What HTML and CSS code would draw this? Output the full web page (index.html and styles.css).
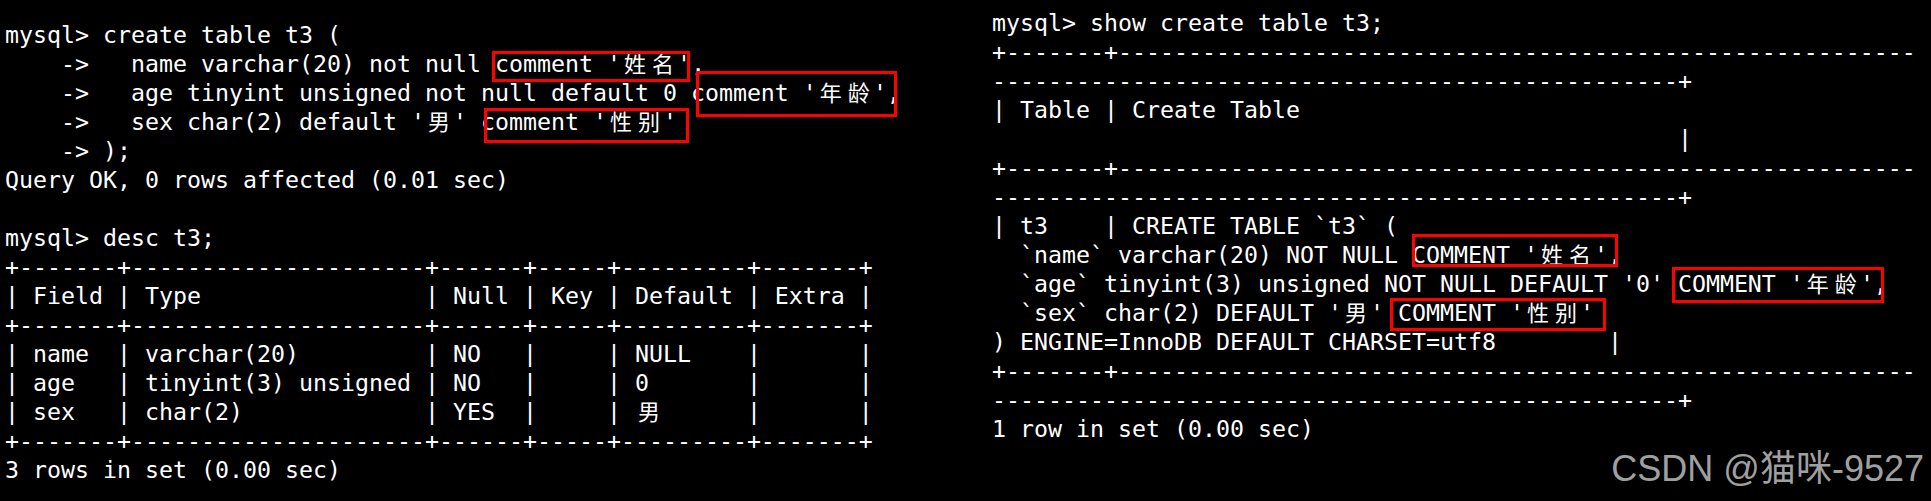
FILE: index.html
```html
<!DOCTYPE html>
<html lang="zh-CN">
<head>
<meta charset="utf-8">
<title>mysql comment</title>
<link rel="stylesheet" href="styles.css">
</head>
<body>
<div class="screen">
  <div class="pane pane-left">
    <div class="ln">mysql&gt; create table t3 (</div>
    <div class="ln">    -&gt;   name varchar(20) not null comment '<span class="cjk">姓</span><span class="cjk">名</span>',</div>
    <div class="ln">    -&gt;   age tinyint unsigned not null default 0 comment '<span class="cjk">年</span><span class="cjk">龄</span>',</div>
    <div class="ln">    -&gt;   sex char(2) default '<span class="cjk">男</span>' comment '<span class="cjk">性</span><span class="cjk">别</span>'</div>
    <div class="ln">    -&gt; );</div>
    <div class="ln">Query OK, 0 rows affected (0.01 sec)</div>
    <div class="ln"></div>
    <div class="ln">mysql&gt; desc t3;</div>
    <div class="ln">+-------+---------------------+------+-----+---------+-------+</div>
    <div class="ln">| Field | Type                | Null | Key | Default | Extra |</div>
    <div class="ln">+-------+---------------------+------+-----+---------+-------+</div>
    <div class="ln">| name  | varchar(20)         | NO   |     | NULL    |       |</div>
    <div class="ln">| age   | tinyint(3) unsigned | NO   |     | 0       |       |</div>
    <div class="ln">| sex   | char(2)             | YES  |     | <span class="cjk">男</span>      |       |</div>
    <div class="ln">+-------+---------------------+------+-----+---------+-------+</div>
    <div class="ln">3 rows in set (0.00 sec)</div>
  </div>
  <div class="pane pane-right">
    <div class="ln">mysql&gt; show create table t3;</div>
    <div class="ln">+-------+---------------------------------------------------------</div>
    <div class="ln">-------------------------------------------------+</div>
    <div class="ln">| Table | Create Table</div>
    <div class="ln">                                                 |</div>
    <div class="ln">+-------+---------------------------------------------------------</div>
    <div class="ln">-------------------------------------------------+</div>
    <div class="ln">| t3    | CREATE TABLE `t3` (</div>
    <div class="ln">  `name` varchar(20) NOT NULL COMMENT '<span class="cjk">姓</span><span class="cjk">名</span>',</div>
    <div class="ln">  `age` tinyint(3) unsigned NOT NULL DEFAULT '0' COMMENT '<span class="cjk">年</span><span class="cjk">龄</span>',</div>
    <div class="ln">  `sex` char(2) DEFAULT '<span class="cjk">男</span>' COMMENT '<span class="cjk">性</span><span class="cjk">别</span>'</div>
    <div class="ln">) ENGINE=InnoDB DEFAULT CHARSET=utf8        |</div>
    <div class="ln">+-------+---------------------------------------------------------</div>
    <div class="ln">-------------------------------------------------+</div>
    <div class="ln">1 row in set (0.00 sec)</div>
  </div>

  <div class="box box-l1"></div>
  <div class="box box-l2"></div>
  <div class="box box-l3"></div>
  <div class="box box-r1"></div>
  <div class="box box-r2"></div>
  <div class="box box-r3"></div>

  <div class="mark">CSDN @猫咪-9527</div>
</div>
</body>
</html>
```

FILE: styles.css
```css
html, body {
  margin: 0;
  padding: 0;
  background: #000;
}

.screen {
  position: relative;
  display: flex;
  width: 1931px;
  height: 501px;
  overflow: hidden;
  background: #000;
}

.pane {
  box-sizing: border-box;
  font-family: "DejaVu Sans Mono", "Noto Sans CJK SC", monospace;
  font-size: 23.25px;
  color: #ffffff;
}

.pane-left {
  width: 992px;
  padding: 19.5px 0 0 5px;
}

.pane-right {
  flex: 1;
  padding-top: 7.5px;
}

.ln {
  height: 29px;
  line-height: 29px;
  white-space: pre;
}

.cjk {
  display: inline-block;
  width: 28px;
  text-align: center;
  font-family: "Noto Sans CJK SC", sans-serif;
  font-size: 22px;
  line-height: 22px;
}

.box {
  position: absolute;
  box-sizing: border-box;
  border: 3px solid #ff0000;
}

.box-l1 { left: 492px; top: 51px; width: 198px; height: 31px; }
.box-l2 { left: 696px; top: 71px; width: 201px; height: 46px; }
.box-l3 { left: 484px; top: 108px; width: 205px; height: 35px; }
.box-r1 { left: 1412px; top: 234px; width: 206px; height: 33px; }
.box-r2 { left: 1672px; top: 267px; width: 212px; height: 36px; }
.box-r3 { left: 1390px; top: 298px; width: 216px; height: 33px; }

.mark {
  position: absolute;
  right: 7px;
  top: 451px;
  font-family: "Liberation Sans", "Noto Sans CJK SC", sans-serif;
  font-size: 36px;
  line-height: 36px;
  color: #a0a0a0;
  white-space: nowrap;
}
```
